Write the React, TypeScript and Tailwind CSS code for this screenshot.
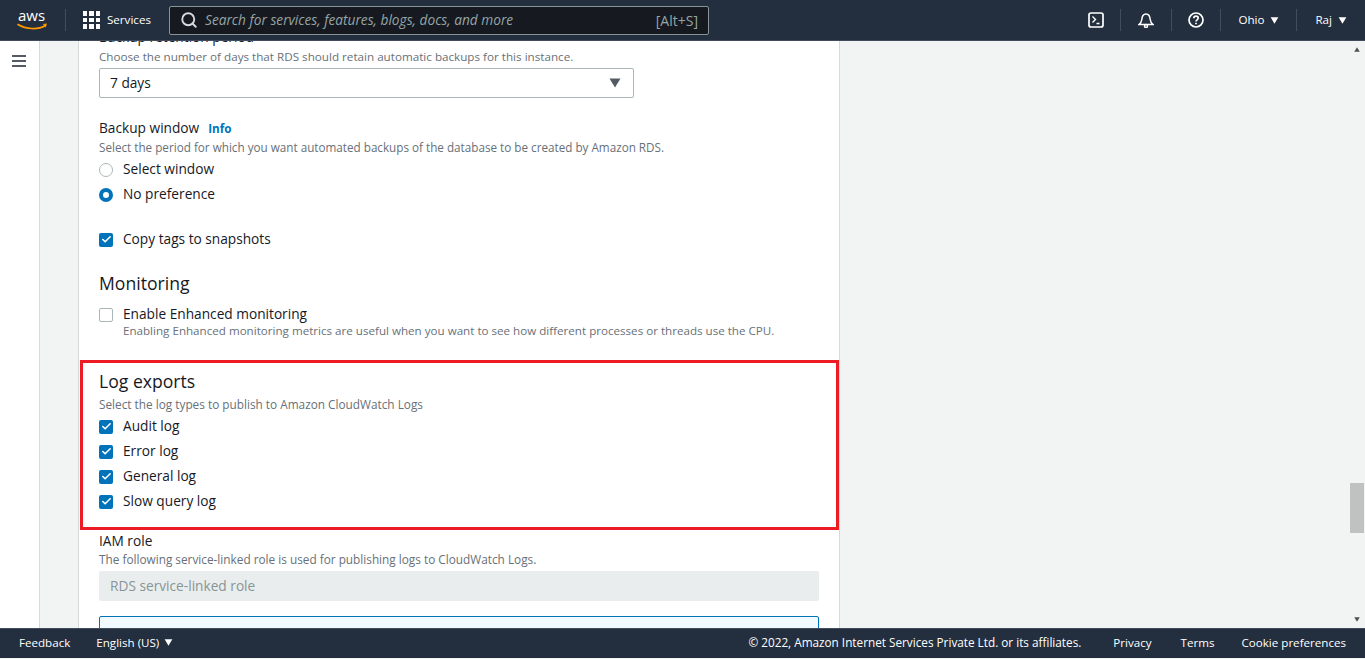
import { Check, Search } from "lucide-react";

function Caret({ className }: { className: string }) {
  return (
    <svg viewBox="0 0 12 10" className={className} fill="currentColor">
      <path d="M0.5 0.5h11L6 9.5z" />
    </svg>
  );
}

function Divider() {
  return <div className="w-px h-[22px] bg-[#414d5c]" />;
}

function CheckRow({ label, checked = true }: { label: string; checked?: boolean }) {
  return (
    <div className="flex items-center h-[25px] text-[13.7px] text-[#16191f]">
      {checked ? (
        <span className="flex items-center justify-center w-[14px] h-[14px] rounded-[2px] bg-[#0073bb]">
          <Check size={11} color="#fff" strokeWidth={3.5} />
        </span>
      ) : (
        <span className="w-[14px] h-[14px] rounded-[2px] border border-[#aab7b8] bg-white" />
      )}
      <span className="ml-[10px]">{label}</span>
    </div>
  );
}

function RadioRow({ label, checked }: { label: string; checked?: boolean }) {
  return (
    <div className="flex items-center h-[25px] text-[13.7px] text-[#16191f]">
      {checked ? (
        <span className="w-[14px] h-[14px] rounded-full border-[4px] border-[#0073bb] bg-white" />
      ) : (
        <span className="w-[14px] h-[14px] rounded-full border border-[#aab7b8] bg-white" />
      )}
      <span className="ml-[10px]">{label}</span>
    </div>
  );
}

export default function App() {
  return (
    <div className="h-[659px] flex flex-col overflow-hidden bg-[#f2f3f3] font-['Open_Sans',sans-serif]">
      <header className="h-[41px] shrink-0 flex items-center bg-[#232f3e] border-b border-[#414d5c] text-white text-[11.6px] font-medium">
        <div className="w-[65px] flex justify-center">
          <svg viewBox="0 0 32 22" className="w-[32px] h-[22px] overflow-visible">
            <text x="1" y="12" fill="#fff" fontSize="15" fontFamily="'Open Sans',sans-serif">aws</text>
            <path d="M1 15.5c8 5 20 5.500 27.500 1" fill="none" stroke="#ff9900" strokeWidth="1.600" strokeLinecap="round" />
            <path d="M26 15l4-.5-1.500 4z" fill="#ff9900" />
          </svg>
        </div>
        <Divider />
        <div className="ml-[17px] grid grid-cols-3 gap-[2px] w-[17px]">
          {[0, 1, 2, 3, 4, 5, 6, 7, 8].map((i) => (
            <span key={i} className="w-[4.400px] h-[4.400px] bg-white" />
          ))}
        </div>
        <span className="ml-[7px] w-[45px] whitespace-nowrap">Services</span>
        <div className="ml-[17px] w-[540px] h-[29px] flex items-center rounded-[2px] border border-[#879596] bg-[#16191f] pl-[10px] pr-[10px]">
          <Search size={18} color="#d5dbdb" strokeWidth={2.5} />
          <span className="ml-[7px] flex-1 text-[13.7px] font-normal italic text-[#95a5a6]">Search for services, features, blogs, docs, and more</span>
          <span className="text-[14px] font-normal text-[#95a5a6]">[Alt+S]</span>
        </div>
        <div className="flex-1 flex items-center justify-end pr-[18px]">
          <svg viewBox="0 0 16 16" className="w-[16px] h-[16px]" fill="none" stroke="#fff" strokeWidth="1.700">
            <rect x="1" y="1" width="14" height="14" rx="2" />
            <path d="M4.500 4.500l3 3-3 3M8.500 11.500h3" strokeWidth="1.400" />
          </svg>
          <div className="mx-[16px]"><Divider /></div>
          <svg viewBox="0 0 16 16" className="w-[16px] h-[16px] mx-[1px]" fill="none" stroke="#fff" strokeWidth="1.500">
            <path d="M1 12.500c2-1.500 2.500-2.500 2.800-5C4.100 4 5.500 2 8 2s3.900 2 4.200 5.500c.3 2.500.8 3.500 2.800 5z" />
            <circle cx="8" cy="14" r="1.500" />
          </svg>
          <div className="mx-[16px]"><Divider /></div>
          <svg viewBox="0 0 16 16" className="w-[16px] h-[16px]" fill="none" stroke="#fff" strokeWidth="1.700">
            <circle cx="8" cy="8" r="7" />
            <path d="M5.800 6.200c0-1.400 1-2.100 2.200-2.100s2.200.8 2.200 2c0 1.800-2.200 1.700-2.200 3.500" />
            <path d="M8 10.800v1.500" />
          </svg>
          <div className="ml-[16px] mr-[17px]"><Divider /></div>
          <span>Ohio</span>
          <Caret className="ml-[6px] w-[9px] h-[7px]" />
          <div className="ml-[17px] mr-[18px]"><Divider /></div>
          <span>Raj</span>
          <Caret className="ml-[6px] w-[9px] h-[7px]" />
        </div>
      </header>

      <div className="flex-1 min-h-0 flex">
        <aside className="w-[40px] shrink-0 bg-white border-r border-[#d5dbdb] pt-[14px] pl-[12px]">
          <div className="flex flex-col gap-[3px] w-[14px]">
            <span className="h-[2px] bg-[#545b64]" />
            <span className="h-[2px] bg-[#545b64]" />
            <span className="h-[2px] bg-[#545b64]" />
          </div>
        </aside>

        <main className="flex-1 min-w-0 overflow-hidden pl-[38px]">
          <section className="w-[762px] -mt-[14px] bg-white border-x border-[#d5dbdb] px-[20px] text-[#16191f] h-[640px]">
            <div className="flex items-center h-[20px] text-[13.7px]">
              Backup retention period
              <span className="ml-[9px] text-[11.7px] font-bold text-[#0073bb]">Info</span>
            </div>
            <p className="h-[20px] leading-[20px] text-[11.66px] text-[#687078]">Choose the number of days that RDS should retain automatic backups for this instance.</p>
            <div className="mt-[1px] w-[535px] h-[30px] flex items-center justify-between rounded-[2px] border border-[#aab7b8] pl-[10px] pr-[12px] text-[13.7px]">
              7 days
              <Caret className="w-[12px] h-[10px] text-[#545b64]" />
            </div>

            <div className="mt-[20px] flex items-center h-[20px] text-[13.7px]">
              Backup window
              <span className="ml-[9px] mt-[1px] text-[11.7px] font-bold text-[#0073bb]">Info</span>
            </div>
            <p className="h-[18px] leading-[18px] text-[11.7px] text-[#687078]">Select the period for which you want automated backups of the database to be created by Amazon RDS.</p>
            <div className="mt-[1px]">
              <RadioRow label="Select window" />
              <RadioRow label="No preference" checked />
            </div>
            <div className="mt-[20px]">
              <CheckRow label="Copy tags to snapshots" />
            </div>

            <h2 className="mt-[16px] h-[30px] leading-[30px] text-[17.6px]">Monitoring</h2>
            <div className="mt-[4px]">
              <CheckRow label="Enable Enhanced monitoring" checked={false} />
            </div>
            <p className="pl-[24px] h-[16px] leading-[16px] -mt-[4px] text-[11.62px] text-[#687078]">Enabling Enhanced monitoring metrics are useful when you want to see how different processes or threads use the CPU.</p>

            <div className="mt-[21px] ml-[-19px] w-[759px] h-[170px] border-[3px] border-[#ed1c24] pl-[16px]">
              <h3 className="mt-[5px] h-[26px] leading-[26px] text-[17.6px]">Log exports</h3>
              <p className="mt-[1px] h-[18px] leading-[18px] text-[11.8px] text-[#687078]">Select the log types to publish to Amazon CloudWatch Logs</p>
              <div className="mt-[1px]">
                <CheckRow label="Audit log" />
                <CheckRow label="Error log" />
                <CheckRow label="General log" />
                <CheckRow label="Slow query log" />
              </div>
            </div>

            <div className="mt-[1px] h-[20px] leading-[20px] text-[13.7px]">IAM role</div>
            <p className="-mt-[1px] h-[18px] leading-[18px] text-[11.8px] text-[#687078]">The following service-linked role is used for publishing logs to CloudWatch Logs.</p>
            <div className="mt-[3px] w-[720px] h-[30px] flex items-center rounded-[2px] bg-[#eaeded] px-[11px] text-[13.7px] text-[#879596]">RDS service-linked role</div>
            <div className="mt-[15px] w-[720px] h-[40px] rounded-[2px] border border-[#0073bb] bg-[#f1faff]" />
          </section>
        </main>

        <div className="w-[16px] shrink-0 flex flex-col items-center text-[#505050]">
          <Caret className="mt-[6px] w-[8px] h-[5px] rotate-180" />
          <div className="h-[431px] shrink-0" />
          <div className="w-[14px] h-[50px] bg-[#c1c1c1]" />
          <div className="flex-1" />
          <Caret className="mb-[6px] w-[8px] h-[5px]" />
        </div>
      </div>

      <footer className="h-[30px] mb-[1px] pb-[2px] shrink-0 flex items-center bg-[#232f3e] border-t border-[#414d5c] text-white text-[11.6px] font-medium px-[19px]">
        <span>Feedback</span>
        <span className="ml-[26px]">English (US)</span>
        <Caret className="ml-[5px] w-[9px] h-[7px]" />
        <span className="ml-auto text-[11.75px]">© 2022, Amazon Internet Services Private Ltd. or its affiliates.</span>
        <span className="ml-[32px]">Privacy</span>
        <span className="ml-[29px]">Terms</span>
        <span className="ml-[27px]">Cookie preferences</span>
      </footer>
    </div>
  );
}
